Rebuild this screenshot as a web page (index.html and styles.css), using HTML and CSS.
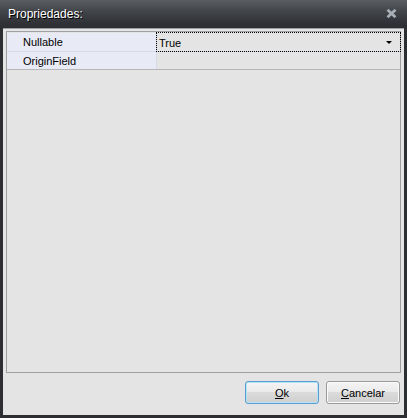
FILE: index.html
```html
<!DOCTYPE html>
<html>
<head>
<meta charset="utf-8">
<link rel="stylesheet" href="styles.css">
</head>
<body>
<div class="window">
  <div class="titlebar">
    <span class="title">Propriedades:</span>
    <svg class="close" width="11" height="9" viewBox="0 0 11 9"><path d="M1.5 0.8 L9.5 8.2 M9.5 0.8 L1.5 8.2" stroke="#a7afb7" stroke-width="2.8" fill="none"/></svg>
  </div>
  <div class="client">
    <div class="grid">
      <div class="row">
        <div class="name">Nullable</div>
        <div class="value focus"><span>True</span><span class="arrow"></span></div>
      </div>
      <div class="row last">
        <div class="name">OriginField</div>
        <div class="value"></div>
      </div>
    </div>
    <div class="buttons">
      <button class="btn default"><u>O</u>k</button>
      <button class="btn"><u>C</u>ancelar</button>
    </div>
  </div>
</div>
</body>
</html>
```
FILE: styles.css
```css
html, body {
  margin: 0;
  padding: 0;
  background: #2c2e32;
}
.window {
  width: 407px;
  height: 418px;
  display: flex;
  flex-direction: column;
  background: #2c2e32;
  font-family: "Liberation Sans", Arial, sans-serif;
}
.titlebar {
  height: 28px;
  display: flex;
  align-items: center;
  justify-content: space-between;
  padding: 0 10px 0 8px;
  background: linear-gradient(#5b5e63 0px, #44474c 10px, #313338 22px, #2b2d31 28px);
  box-sizing: border-box;
}
.title {
  color: #ffffff;
  font-size: 12px;
  text-shadow: 1px 1px 0 #000;
  padding-bottom: 1px;
}
.close {
  display: block;
  margin-top: -1px;
}
.client {
  flex: 1;
  margin: 0 3px 3px 3px;
  background: #e4e4e4;
  border-top: 1px solid #9c9ea2;
  display: flex;
  flex-direction: column;
  padding: 2px 3px 0 3px;
}
.grid {
  height: 342px;
  border: 1px solid #a0a0a0;
  background: #e4e4e4;
  box-sizing: border-box;
  font-size: 11px;
  color: #000;
  padding-top: 1px;
}
.row {
  display: flex;
  height: 19px;
  border-bottom: 1px solid #d6d9e6;
  box-sizing: border-box;
}
.row.last {
  height: 18px;
  border-bottom: 1px solid #b6b6b6;
}
.name {
  width: 133px;
  padding-left: 16px;
  padding-top: 2px;
  background: #e8eaf6;
  border-right: 1px solid #d6d9e6;
  line-height: 15px;
  flex: none;
}
.value {
  flex: 1;
  line-height: 15px;
  padding-left: 2px;
  padding-top: 2px;
  display: flex;
  justify-content: space-between;
  align-items: center;
  box-sizing: border-box;
}
.value.focus {
  outline: 1px dotted #000;
  outline-offset: 0px;
  padding-right: 8px;
}
.arrow {
  width: 0;
  height: 0;
  border-left: 3px solid transparent;
  border-right: 3px solid transparent;
  border-top: 3px solid #000;
  margin-top: -1px;
}
.buttons {
  flex: 1;
  display: flex;
  justify-content: flex-end;
  align-items: flex-start;
  gap: 7px;
  padding-top: 8px;
  padding-right: 1px;
}
.btn {
  width: 74px;
  height: 23px;
  font-family: "Liberation Sans", Arial, sans-serif;
  font-size: 11px;
  color: #000;
  border: 1px solid #9a9a9a;
  border-radius: 3px;
  background: linear-gradient(#f4f4f4 0%, #ebebeb 45%, #dbdbdb 50%, #cfcfcf 100%);
  box-shadow: inset 0 0 0 1px #fbfbfb;
  padding: 0;
}
.btn.default {
  border-color: #5a9ccc;
  box-shadow: inset 0 0 0 1px #b4e4f8;
}
.btn u {
  text-decoration: underline;
}
```
